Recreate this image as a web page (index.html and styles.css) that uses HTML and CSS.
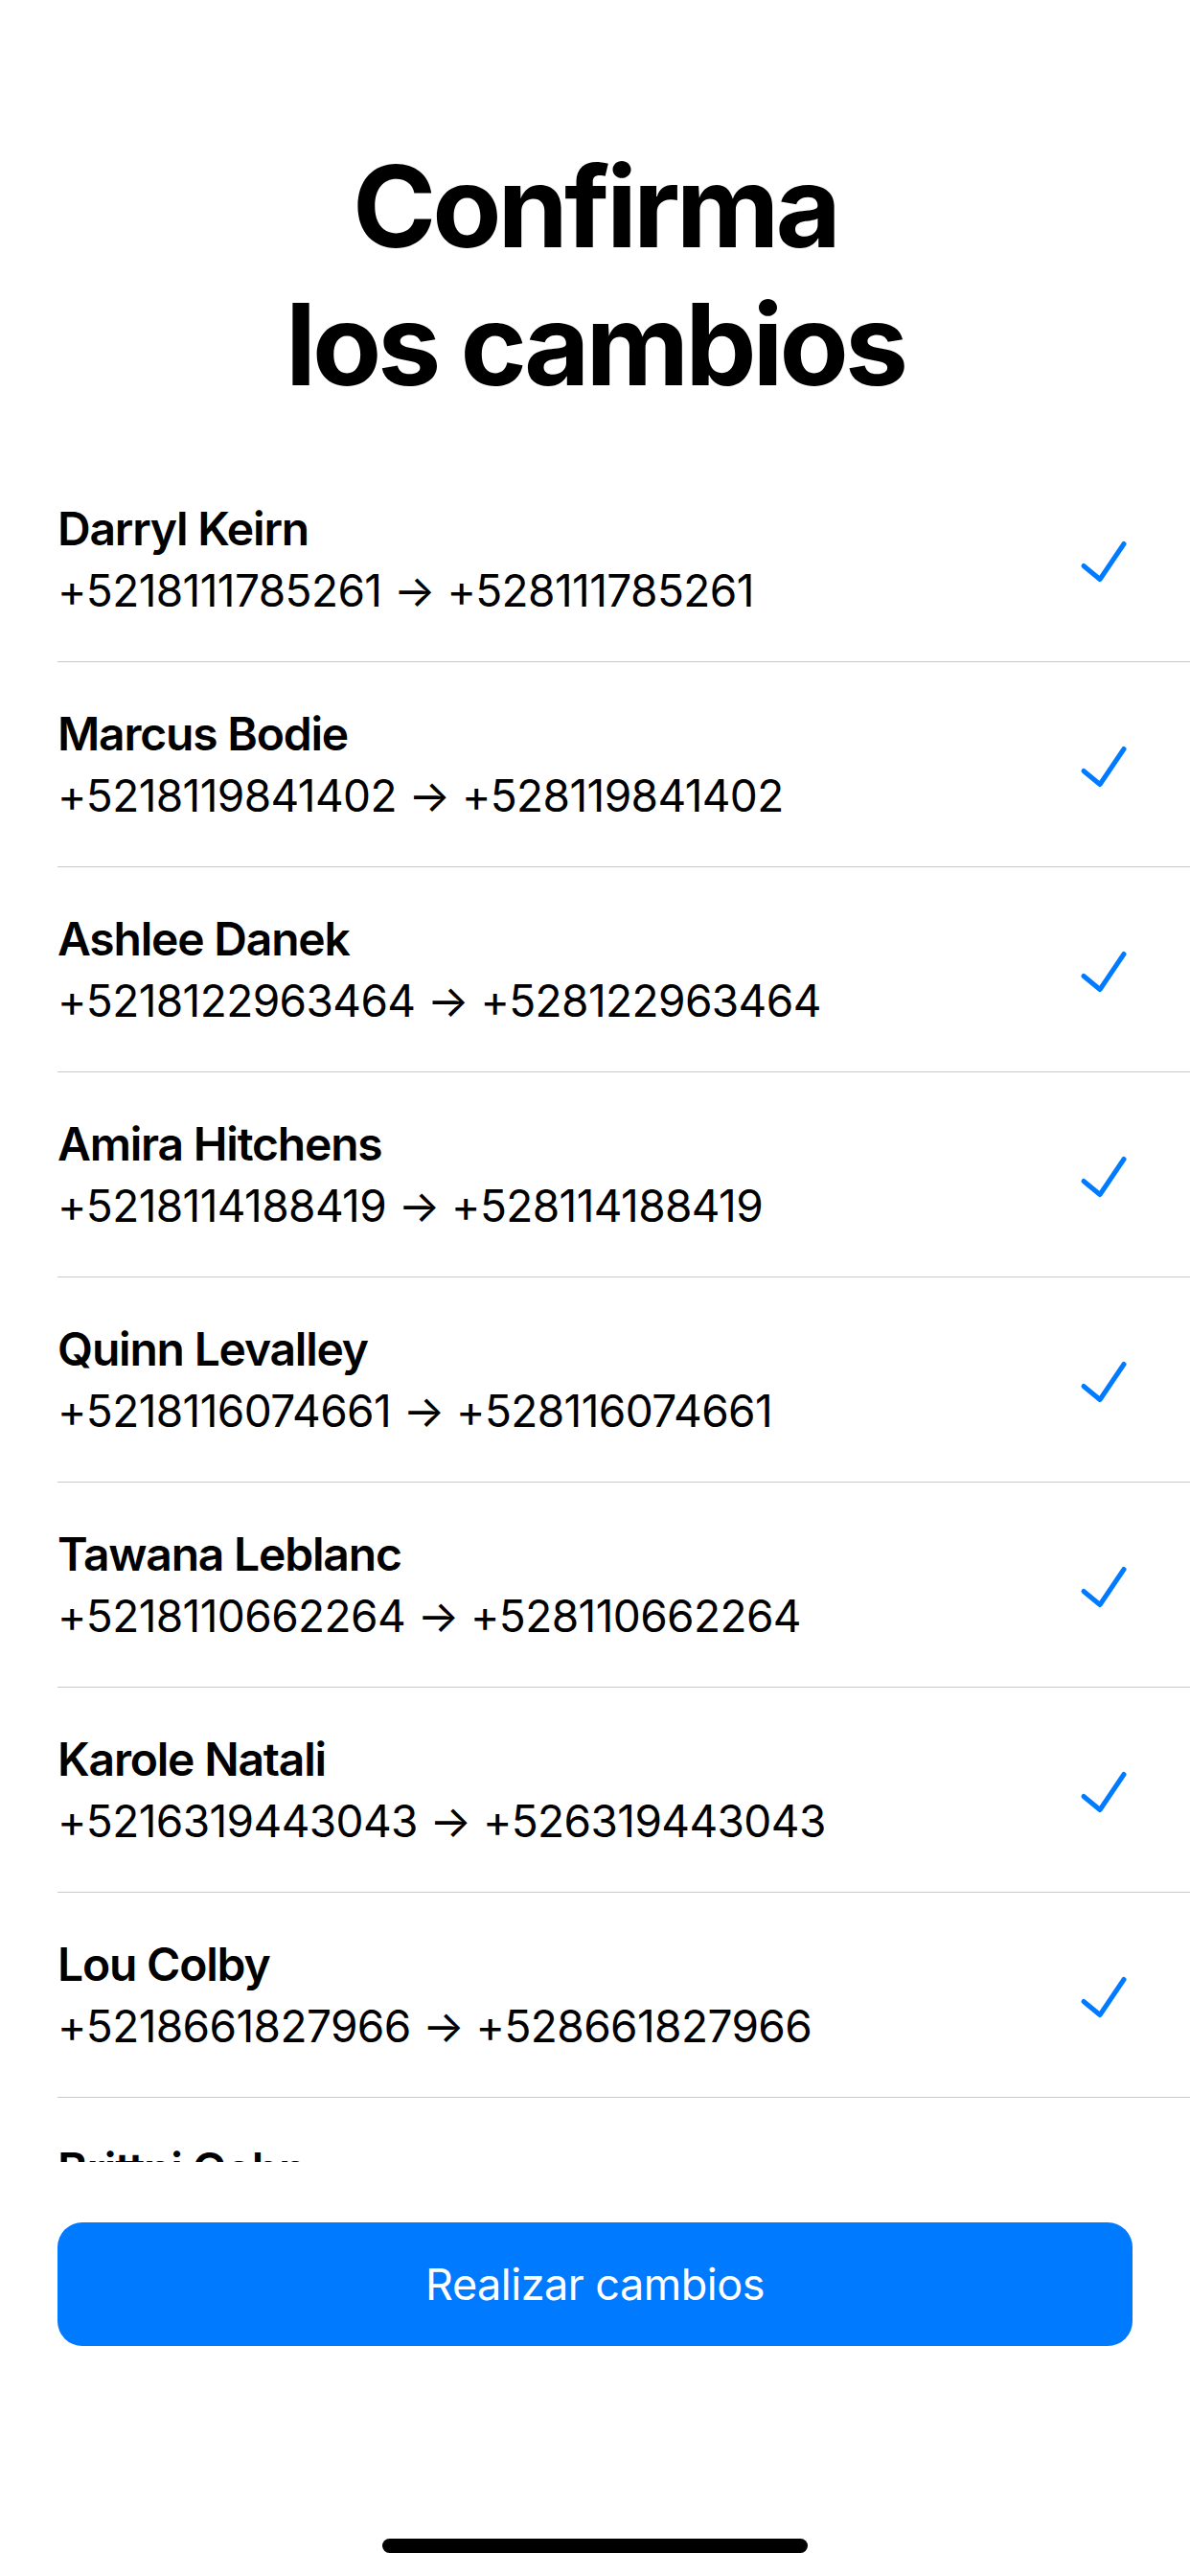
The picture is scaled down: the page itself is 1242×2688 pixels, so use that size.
FILE: index.html
```html
<!DOCTYPE html>
<html lang="es">
<head>
    <meta charset="UTF-8">
    <meta name="viewport" content="width=device-width, initial-scale=1.0">
    <title>Confirma los cambios</title>
    <link rel="stylesheet" href="styles.css">
</head>
<body>
    <div class="screen">
        <h1 class="title">Confirma<br>los cambios</h1>

        <div class="list">
            <div class="row">
                <div class="info">
                    <div class="name">Darryl Keirn</div>
                    <div class="number">+5218111785261 → +528111785261</div>
                </div>
                <svg class="check" viewBox="0 0 60 60"><path d="M9 36.5 L26 50.5 L51 13.5"/></svg>
            </div>
            <div class="row">
                <div class="info">
                    <div class="name">Marcus Bodie</div>
                    <div class="number">+5218119841402 → +528119841402</div>
                </div>
                <svg class="check" viewBox="0 0 60 60"><path d="M9 36.5 L26 50.5 L51 13.5"/></svg>
            </div>
            <div class="row">
                <div class="info">
                    <div class="name">Ashlee Danek</div>
                    <div class="number">+5218122963464 → +528122963464</div>
                </div>
                <svg class="check" viewBox="0 0 60 60"><path d="M9 36.5 L26 50.5 L51 13.5"/></svg>
            </div>
            <div class="row">
                <div class="info">
                    <div class="name">Amira Hitchens</div>
                    <div class="number">+5218114188419 → +528114188419</div>
                </div>
                <svg class="check" viewBox="0 0 60 60"><path d="M9 36.5 L26 50.5 L51 13.5"/></svg>
            </div>
            <div class="row">
                <div class="info">
                    <div class="name">Quinn Levalley</div>
                    <div class="number">+5218116074661 → +528116074661</div>
                </div>
                <svg class="check" viewBox="0 0 60 60"><path d="M9 36.5 L26 50.5 L51 13.5"/></svg>
            </div>
            <div class="row">
                <div class="info">
                    <div class="name">Tawana Leblanc</div>
                    <div class="number">+5218110662264 → +528110662264</div>
                </div>
                <svg class="check" viewBox="0 0 60 60"><path d="M9 36.5 L26 50.5 L51 13.5"/></svg>
            </div>
            <div class="row">
                <div class="info">
                    <div class="name">Karole Natali</div>
                    <div class="number">+5216319443043 → +526319443043</div>
                </div>
                <svg class="check" viewBox="0 0 60 60"><path d="M9 36.5 L26 50.5 L51 13.5"/></svg>
            </div>
            <div class="row">
                <div class="info">
                    <div class="name">Lou Colby</div>
                    <div class="number">+5218661827966 → +528661827966</div>
                </div>
                <svg class="check" viewBox="0 0 60 60"><path d="M9 36.5 L26 50.5 L51 13.5"/></svg>
            </div>
            <div class="row">
                <div class="info">
                    <div class="name">Brittni Cohn</div>
                </div>
            </div>
        </div>

        <div class="footer">
            <button class="submit">Realizar cambios</button>
            <div class="home-indicator"></div>
        </div>
    </div>
</body>
</html>
```

FILE: styles.css
```css
body {
    margin: 0;
    padding: 0;
    background: #fff;
    font-family: Inter, "Noto Sans", sans-serif;
    color: #000;
}

.screen {
    width: 1242px;
    height: 2688px;
    display: flex;
    flex-direction: column;
    overflow: hidden;
}

.title {
    margin: 143px 0 0;
    font-size: 118px;
    line-height: 144px;
    font-weight: 700;
    letter-spacing: -4px;
    text-align: center;
}

.list {
    margin-top: 46px;
    height: 1779px;
    overflow: hidden;
}

.row {
    display: flex;
    justify-content: space-between;
    height: 213px;
    margin-left: 60px;
    padding-right: 60px;
    border-bottom: 1px solid #c8c7cc;
}

.info {
    padding-top: 46px;
}

.name {
    font-size: 48px;
    line-height: 57px;
    font-weight: 600;
    letter-spacing: -1.2px;
}

.number {
    margin-top: 8px;
    font-size: 46px;
    line-height: 57px;
    font-weight: 400;
    letter-spacing: -0.6px;
}

.check {
    align-self: center;
    width: 60px;
    height: 60px;
    fill: none;
    stroke: #007aff;
    stroke-width: 5;
    stroke-linecap: round;
    stroke-linejoin: round;
}

.footer {
    flex: 1;
    display: flex;
    flex-direction: column;
    align-items: center;
    padding-top: 63px;
}

.submit {
    width: 1122px;
    height: 129px;
    border: none;
    border-radius: 26px;
    background: #007aff;
    color: #fff;
    font-family: Inter, "Noto Sans", sans-serif;
    font-size: 45px;
    letter-spacing: -0.5px;
}

.home-indicator {
    margin-top: 201px;
    width: 444px;
    height: 15px;
    border-radius: 8px;
    background: #000;
}
```
